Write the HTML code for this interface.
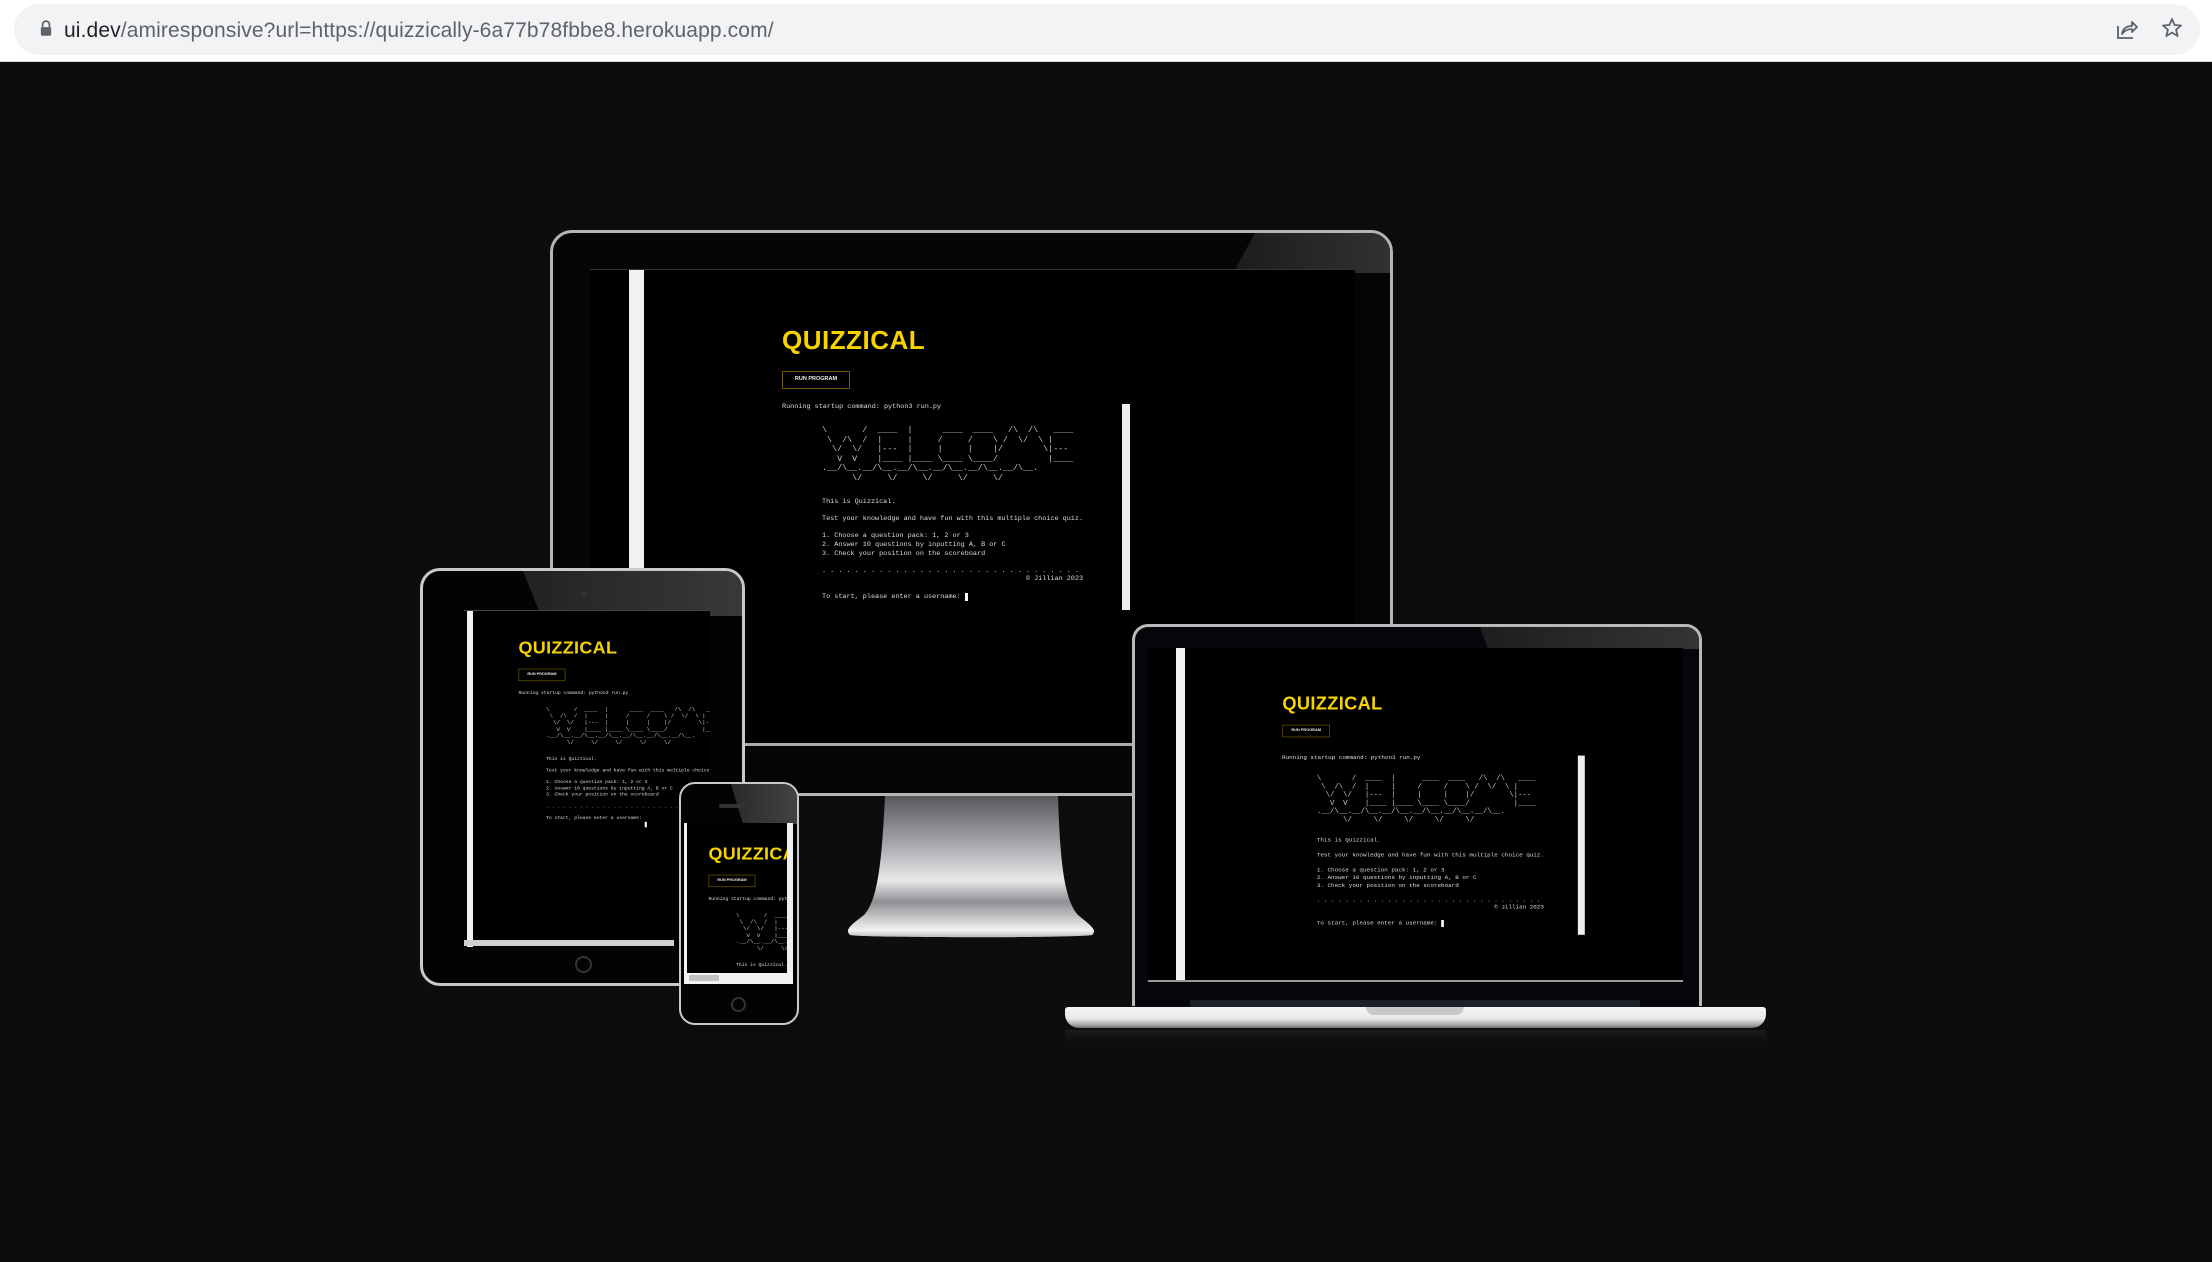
<!DOCTYPE html>
<html><head><meta charset="utf-8">
<style>
*{margin:0;padding:0;box-sizing:border-box}
html,body{width:2212px;height:1262px;overflow:hidden;background:#0e0d0e;font-family:"Liberation Sans",sans-serif}
.top{position:absolute;left:0;top:0;width:2212px;height:62px;background:#fff;border-bottom:1px solid #ddd}
.pill{position:absolute;left:14px;top:4px;width:2186px;height:51px;background:#f1f3f4;border-radius:26px}
.url{position:absolute;left:64px;top:15px;font-size:21px;color:#5f6368;letter-spacing:0.12px}
.url b{font-weight:normal;color:#202124}
.abs{position:absolute}
.scr{position:absolute;overflow:hidden;background:#000}
.app{position:absolute;left:0;top:0;width:764px;height:481px;transform-origin:0 0}
.title{position:absolute;left:192px;top:55px;font-size:26px;font-weight:bold;color:#f7d400;letter-spacing:0.5px}
.btn{position:absolute;left:192px;top:101px;width:68px;height:18px;border:1.5px solid #6d5c00;color:#eee;font-size:5.5px;font-weight:bold;line-height:15px;text-align:center}
.t{position:absolute;font-family:"Liberation Mono",monospace;font-size:6.8px;color:#ddd;white-space:pre;line-height:8.6px}
.art{color:#c8ccd6;line-height:9.6px;font-size:8.4px}
.sb{position:absolute;left:532px;top:134px;width:8px;height:206px;background:#eee}
.cur{position:absolute;left:375px;top:323px;width:3px;height:8px;background:#fff}
.wbar{position:absolute;background:#f2f2f2}
</style></head><body>
<div class="top"><div class="pill">
<svg class="abs" style="left:26px;top:15px" width="12" height="18" viewBox="0 0 14 20"><path d="M3 9V6a4 4 0 0 1 8 0v3" fill="none" stroke="#5f6368" stroke-width="2"/><rect x="1" y="9" width="12" height="10" rx="1.5" fill="#5f6368"/></svg>
<div class="url" style="left:50px"><b>ui.dev</b>/amiresponsive?url=https://quizzically-6a77b78fbbe8.herokuapp.com/</div>
<svg class="abs" style="left:2102px;top:14px" width="22" height="22" viewBox="0 0 22 22"><path d="M2 8v12h15" fill="none" stroke="#5f6368" stroke-width="1.8"/><path d="M6 16c1-6 5-8 10-8V4l5 5-5 5v-3c-4 0-7 1-10 5z" fill="none" stroke="#5f6368" stroke-width="1.8" stroke-linejoin="round"/></svg>
<svg class="abs" style="left:2146px;top:12px" width="24" height="24" viewBox="0 0 24 24"><path d="M12 3l2.6 6 6.4.5-4.9 4.2 1.5 6.3L12 16.6 6.4 20l1.5-6.3L3 9.5 9.4 9z" fill="none" stroke="#5f6368" stroke-width="1.8" stroke-linejoin="round"/></svg>
</div></div>

<!-- MONITOR -->
<svg class="abs" style="left:840px;top:780px" width="260" height="170" viewBox="0 0 260 170">
<defs><linearGradient id="st" x1="0" y1="0" x2="0" y2="1"><stop offset="0" stop-color="#58585c"/><stop offset="0.35" stop-color="#a9aaae"/><stop offset="0.6" stop-color="#e8e9ea"/><stop offset="0.75" stop-color="#8f9094"/><stop offset="0.95" stop-color="#f2f2f2"/><stop offset="1" stop-color="#bbb"/></linearGradient></defs>
<path d="M45 16H218C220 80 224 120 238 135C250 145 258 150 252 155C240 158 20 158 10 155C4 150 12 144 24 135C38 120 42 80 45 16z" fill="url(#st)"/>
</svg>
<div class="abs" style="left:550px;top:230px;width:843px;height:566px;border:3px solid #b5b5b5;border-radius:22px 22px 4px 4px;background:#050505;overflow:hidden">
<div class="abs" style="left:680px;top:0;width:170px;height:40px;background:linear-gradient(90deg,#1c1c1c,#333);clip-path:polygon(22px 0,170px 0,170px 40px,0 40px)"></div>
<div class="abs" style="left:-3px;top:510px;width:843px;height:3px;background:#aaa"></div>
</div>
<div class="scr" style="left:590px;top:269px;width:765px;height:474px;border-top:1px solid #333">
<div class="wbar" style="left:39px;top:0;width:15px;height:474px"></div>
<div class="app">
<div class="title">QUIZZICAL</div>
<div class="btn">RUN PROGRAM</div>
<div class="t" style="left:192px;top:133px">Running startup command: python3 run.py</div>
<div class="t art" style="left:232px;top:156px">\       /  ____  |      ____  ____   /\  /\   ____
 \  /\  /  |     |     /     /    \ /  \/  \ |
  \/  \/   |---  |     |     |    |/        \|---
   V  V    |____ |____ \____ \____/          |____
.__/\__.__/\__.__/\__.__/\__.__/\__.__/\__.
      \/     \/     \/     \/     \/</div>
<div class="t" style="left:232px;top:228px">This is Quizzical.

Test your knowledge and have fun with this multiple choice quiz.

1. Choose a question pack: 1, 2 or 3
2. Answer 10 questions by inputting A, B or C
3. Check your position on the scoreboard

. . . . . . . . . . . . . . . . . . . . . . . . . . . . . . . .
                                                  © Jillian 2023

To start, please enter a username: </div>
<div class="cur"></div>
<div class="sb"></div>
</div></div>

<!-- TABLET -->
<div class="abs" style="left:420px;top:568px;width:325px;height:418px;border:3px solid #c9c9c9;border-radius:20px;background:#030303;overflow:hidden">
<div class="abs" style="left:100px;top:0;width:230px;height:45px;background:linear-gradient(90deg,#222,#3a3a3a);clip-path:polygon(0 0,230px 0,230px 45px,18px 45px)"></div>
<div class="abs" style="left:158px;top:20px;width:5px;height:5px;border-radius:50%;background:#333"></div>
<div class="abs" style="left:152px;top:385px;width:17px;height:17px;border-radius:50%;border:2px solid #333"></div>
</div>
<div class="scr" style="left:464px;top:610px;width:246px;height:337px;border-top:1px solid #444">
<div class="wbar" style="left:3px;top:0;width:6px;height:337px"></div>
<div class="abs" style="left:0;top:329px;width:210px;height:6px;background:#cfcfcf"></div>
<div class="app" style="transform:translate(-78px,-12px) scale(0.69)">
<div class="title">QUIZZICAL</div>
<div class="btn">RUN PROGRAM</div>
<div class="t" style="left:192px;top:133px">Running startup command: python3 run.py</div>
<div class="t art" style="left:232px;top:156px">\       /  ____  |      ____  ____   /\  /\   ____
 \  /\  /  |     |     /     /    \ /  \/  \ |
  \/  \/   |---  |     |     |    |/        \|---
   V  V    |____ |____ \____ \____/          |____
.__/\__.__/\__.__/\__.__/\__.__/\__.__/\__.
      \/     \/     \/     \/     \/</div>
<div class="t" style="left:232px;top:228px">This is Quizzical.

Test your knowledge and have fun with this multiple choice quiz.

1. Choose a question pack: 1, 2 or 3
2. Answer 10 questions by inputting A, B or C
3. Check your position on the scoreboard

. . . . . . . . . . . . . . . . . . . . . . . . . . . . . . . .

To start, please enter a username: </div>
<div class="cur"></div>
</div></div>

<!-- PHONE -->
<div class="abs" style="left:679px;top:782px;width:120px;height:243px;border:2.5px solid #c9c9c9;border-radius:16px;background:#030303;overflow:hidden">
<div class="abs" style="left:50px;top:0;width:70px;height:40px;background:linear-gradient(90deg,#2a2a2a,#444);clip-path:polygon(0 0,70px 0,70px 40px,12px 40px)"></div>
<div class="abs" style="left:38px;top:20px;width:26px;height:4px;border-radius:2px;background:#333"></div>
<div class="abs" style="left:50px;top:213px;width:15px;height:15px;border-radius:50%;border:2px solid #333"></div>
</div>
<div class="scr" style="left:684px;top:823px;width:109px;height:161px;background:#000">
<div class="wbar" style="left:0;top:0;width:3px;height:161px"></div>
<div class="abs" style="left:103px;top:0;width:6px;height:150px;background:#eee"></div>
<div class="abs" style="left:0;top:150px;width:109px;height:11px;background:#f2f2f2"></div>
<div class="abs" style="left:5px;top:152px;width:30px;height:6px;background:#c0c0c0"></div>
<div class="abs" style="left:0;top:0;width:103px;height:150px;overflow:hidden">
<div class="app" style="transform:translate(-108px,-18px) scale(0.69)">
<div class="title">QUIZZICAL</div>
<div class="btn">RUN PROGRAM</div>
<div class="t" style="left:192px;top:133px">Running startup command: python3 run.py</div>
<div class="t art" style="left:232px;top:156px">\       /  ____  |
 \  /\  /  |     |
  \/  \/   |---  |
   V  V    |____ |____
.__/\__.__/\__.
      \/     \/</div>
<div class="t" style="left:232px;top:228px">This is Quizzical.

Test your knowledge</div>
</div></div></div>

<!-- LAPTOP -->
<div class="abs" style="left:1132px;top:624px;width:570px;height:382px;border:3px solid #b9b9b9;border-bottom:none;border-radius:16px 16px 0 0;background:#05060a;overflow:hidden">
<div class="abs" style="left:345px;top:0;width:230px;height:22px;background:linear-gradient(90deg,#1e1e1e,#353535);clip-path:polygon(0 0,230px 0,230px 22px,8px 22px)"></div>
</div>
<div class="scr" style="left:1148px;top:648px;width:535px;height:334px;border-bottom:2px solid #999">
<div class="wbar" style="left:28px;top:0;width:9px;height:334px"></div>
<div class="app" style="transform:translate(0,6px) scale(0.7)">
<div class="title">QUIZZICAL</div>
<div class="btn">RUN PROGRAM</div>
</div>
<div class="app" style="transform:translate(-33px,-9px) scale(0.87)">
<div class="t" style="left:192px;top:133px">Running startup command: python3 run.py</div>
<div class="t art" style="left:232px;top:156px">\       /  ____  |      ____  ____   /\  /\   ____
 \  /\  /  |     |     /     /    \ /  \/  \ |
  \/  \/   |---  |     |     |    |/        \|---
   V  V    |____ |____ \____ \____/          |____
.__/\__.__/\__.__/\__.__/\__.__/\__.__/\__.
      \/     \/     \/     \/     \/</div>
<div class="t" style="left:232px;top:228px">This is Quizzical.

Test your knowledge and have fun with this multiple choice quiz.

1. Choose a question pack: 1, 2 or 3
2. Answer 10 questions by inputting A, B or C
3. Check your position on the scoreboard

. . . . . . . . . . . . . . . . . . . . . . . . . . . . . . . .
                                                  © Jillian 2023

To start, please enter a username: </div>
<div class="cur"></div>
<div class="sb"></div>
</div></div>
<div class="abs" style="left:1190px;top:1000px;width:450px;height:7px;background:#1c2028"></div>
<div class="abs" style="left:1065px;top:1007px;width:701px;height:21px;border-radius:3px 3px 14px 14px;background:linear-gradient(180deg,#f4f4f4 0,#e9e9e9 55%,#a5a5a8 85%,#707074 100%)"></div>
<div class="abs" style="left:1366px;top:1007px;width:98px;height:8px;border-radius:0 0 8px 8px;background:#c8c8c8"></div>
<div class="abs" style="left:1065px;top:1030px;width:701px;height:12px;background:linear-gradient(180deg,#1b1b1c,#0e0d0e)"></div>
</body></html>
